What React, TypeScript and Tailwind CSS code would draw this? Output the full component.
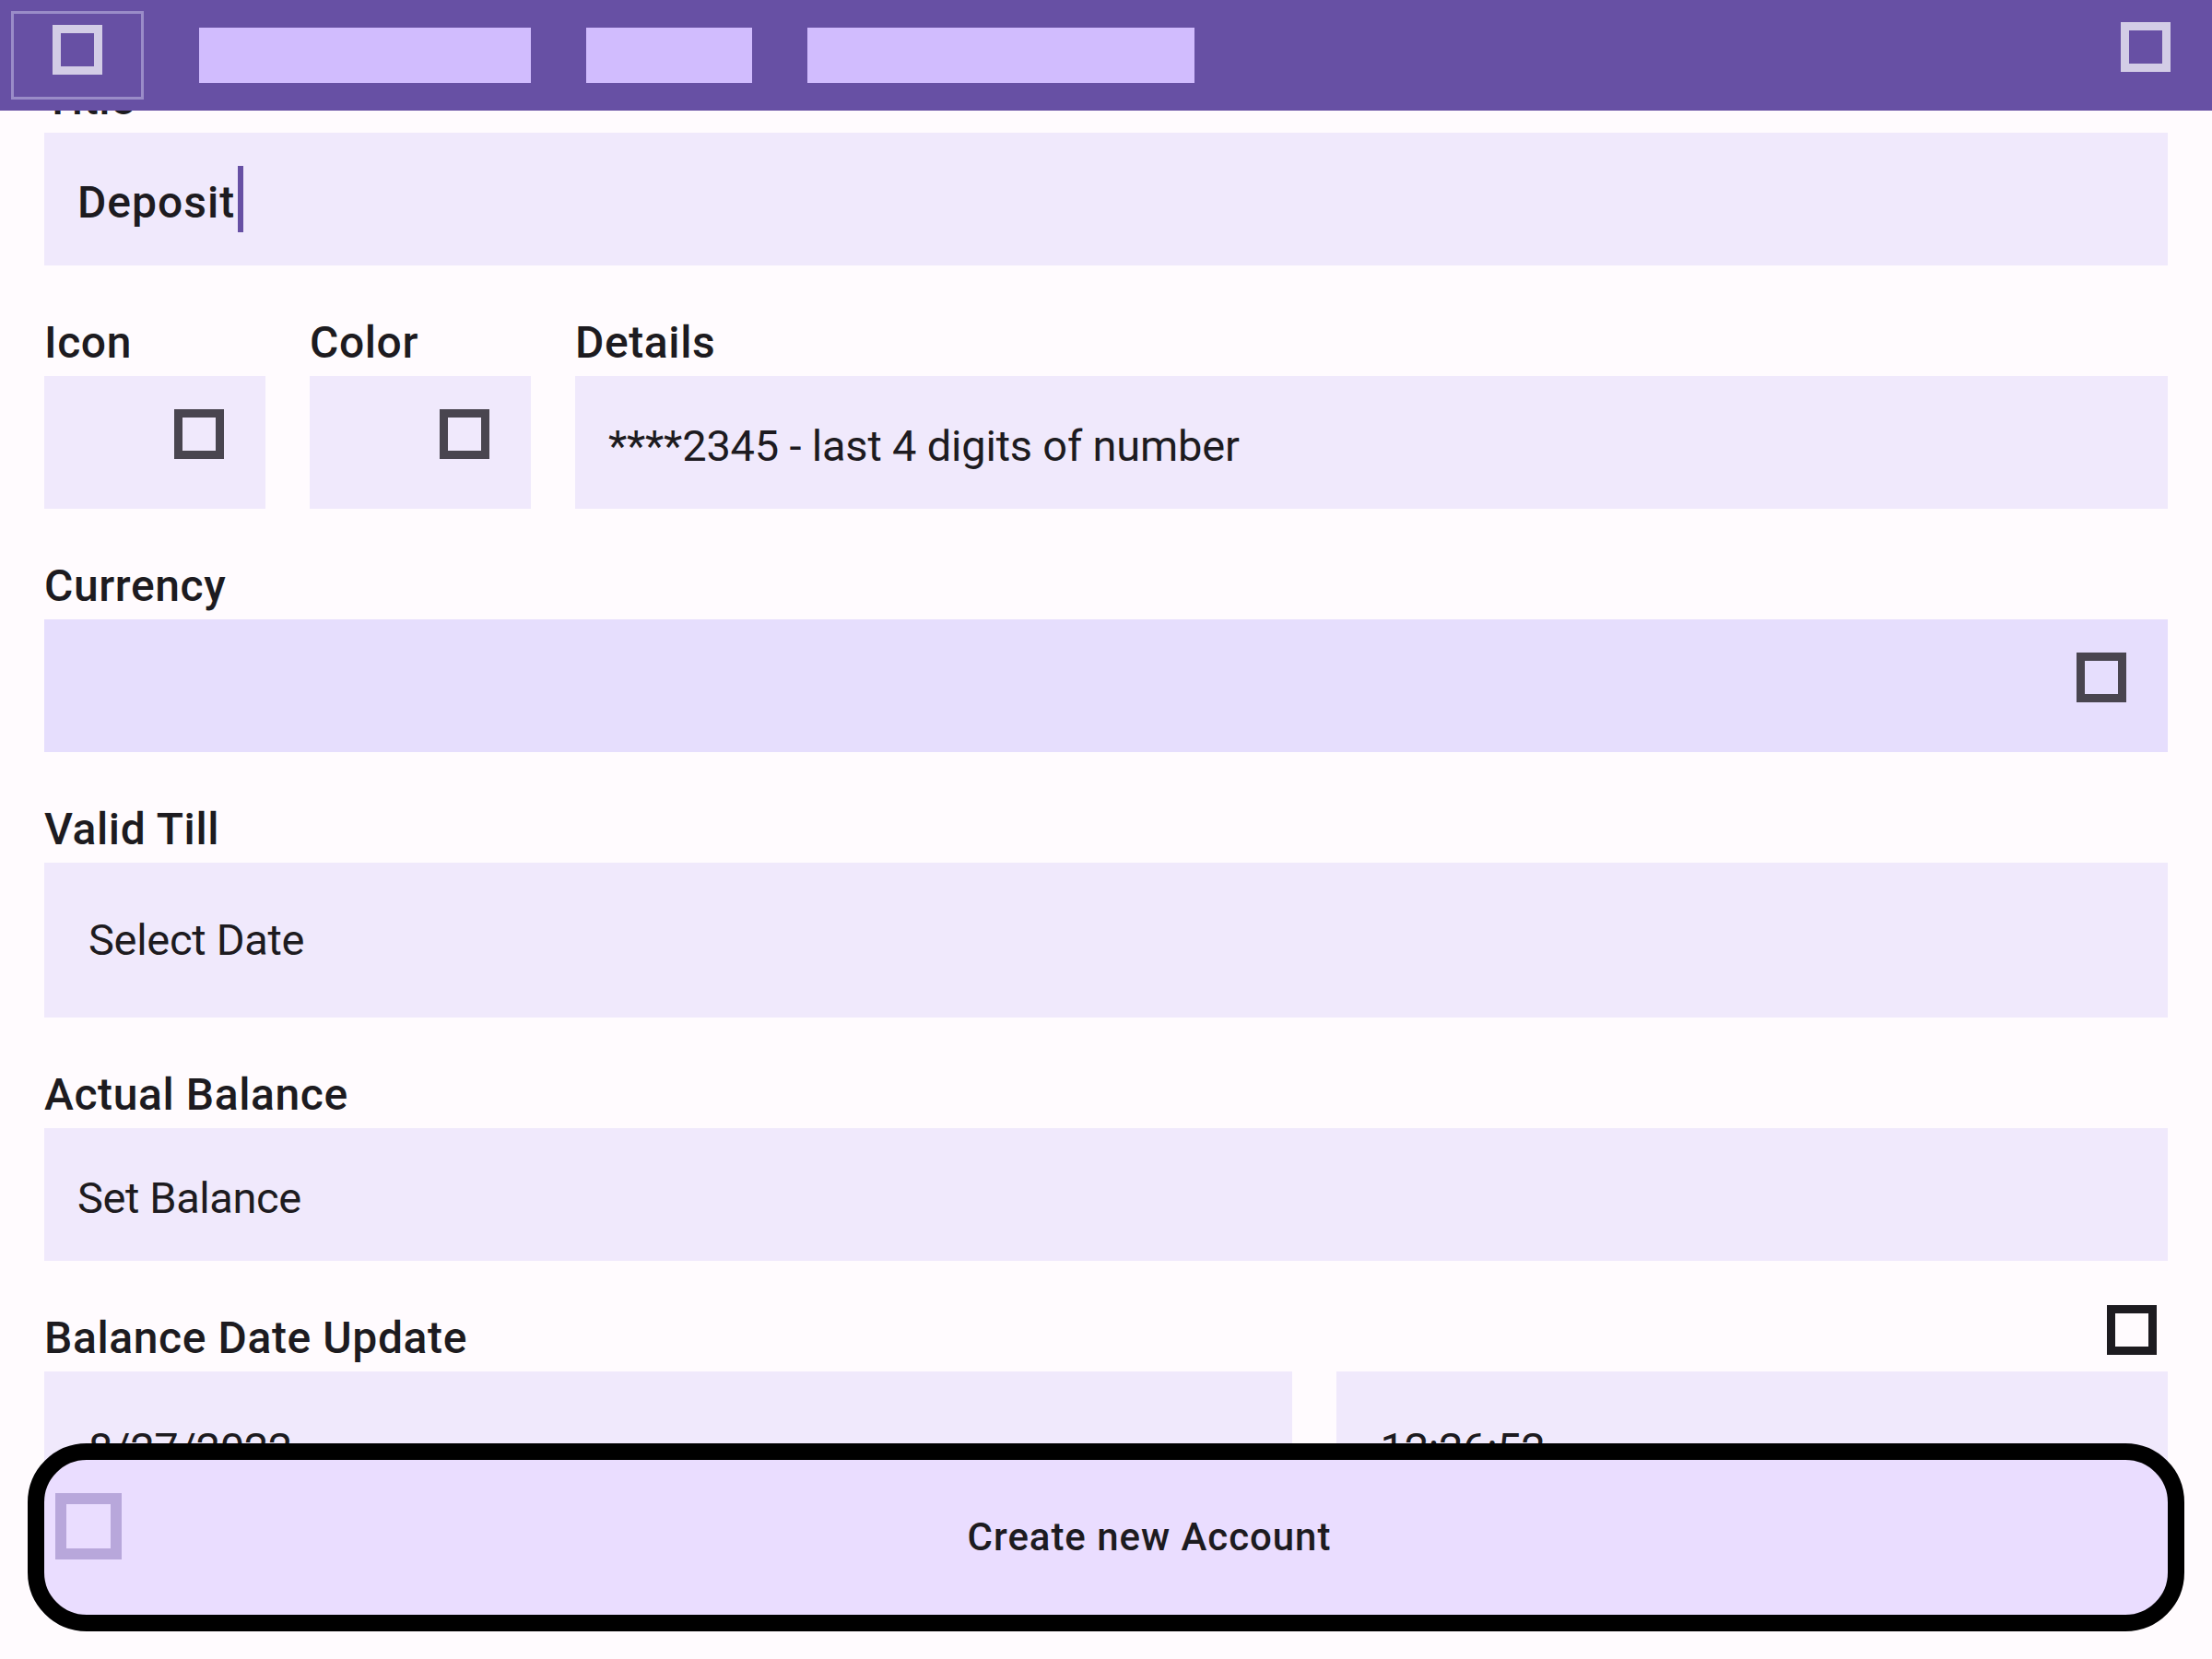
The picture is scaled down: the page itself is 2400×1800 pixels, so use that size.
import React from "react";

// placeholder glyph box (the icon font did not load in the original)
const Tofu = ({ size, stroke, color, className = "" }: any) => (
  <span
    className={`block box-border shrink-0 ${className}`}
    style={{ width: size, height: size, borderWidth: stroke, borderColor: color, borderStyle: "solid" }}
  />
);

const Label = ({ children }: any) => (
  <div className="h-[72px] text-[48px] leading-[72px] font-medium tracking-[0.6px] text-[#1d1b20] whitespace-nowrap">
    {children}
  </div>
);

const App = () => {
  return (
    <div className="relative w-full h-[1800px] overflow-hidden bg-[#fffbfe] font-['Roboto',sans-serif] text-[#1d1b20]">
      {/* top app bar */}
      <div className="absolute top-0 left-0 right-0 z-10 h-[120px] bg-[#6750a4] flex items-center">
        <div className="ml-[12px] w-[144px] h-[96px] border-[3px] border-[#9a8cc8] flex items-center justify-center pb-[12px]">
          <Tofu size={54} stroke={9} color="#d3cde6" />
        </div>
        <div className="ml-[60px] w-[360px] h-[60px] bg-[#d1bcfe]" />
        <div className="ml-[60px] w-[180px] h-[60px] bg-[#d1bcfe]" />
        <div className="ml-[60px] w-[420px] h-[60px] bg-[#d1bcfe]" />
        <div className="flex-1" />
        <Tofu size={54} stroke={9} color="#d3cde6" className="self-start mt-[24px] mr-[45px]" />
      </div>

      {/* form */}
      <div className="pt-[72px] px-[48px] flex flex-col gap-[48px]">
        <div>
          <Label>Title</Label>
          <div className="h-[144px] bg-[#f0e9fc] pl-[36px] flex items-center">
            <span className="pt-[8px] text-[48px] leading-[72px] font-medium tracking-[1px]">Deposit</span>
            <span className="ml-[3px] w-[6px] h-[72px] bg-[#6750a4]" />
          </div>
        </div>

        <div className="flex gap-[48px]">
          <div className="w-[240px]">
            <Label>Icon</Label>
            <div className="h-[144px] bg-[#f0e9fc] flex items-center justify-end pr-[45px] pb-[18px]">
              <Tofu size={54} stroke={9} color="#49454f" />
            </div>
          </div>
          <div className="w-[240px]">
            <Label>Color</Label>
            <div className="h-[144px] bg-[#f0e9fc] flex items-center justify-end pr-[45px] pb-[18px]">
              <Tofu size={54} stroke={9} color="#49454f" />
            </div>
          </div>
          <div className="flex-1">
            <Label>Details</Label>
            <div className="h-[144px] bg-[#f0e9fc] pl-[36px] flex items-center">
              <span className="pt-[8px] text-[47px] leading-[72px] tracking-[-0.2px]">****2345 - last 4 digits of number</span>
            </div>
          </div>
        </div>

        <div>
          <Label>Currency</Label>
          <div className="h-[144px] bg-[#e6defd] flex items-center justify-end pr-[45px] pb-[18px]">
            <Tofu size={54} stroke={9} color="#49454f" />
          </div>
        </div>

        <div>
          <Label>Valid Till</Label>
          <div className="h-[168px] bg-[#f0e9fc] pl-[48px] flex items-center">
            <span className="text-[47px] leading-[72px] tracking-[-0.3px]">Select Date</span>
          </div>
        </div>

        <div>
          <Label>Actual Balance</Label>
          <div className="h-[144px] bg-[#f0e9fc] pl-[36px] flex items-center">
            <span className="pt-[8px] text-[47px] leading-[72px] tracking-[-0.4px]">Set Balance</span>
          </div>
        </div>

        <div>
          <div className="flex items-start justify-between pr-[12px]">
            <Label>Balance Date Update</Label>
            <Tofu size={54} stroke={9} color="#1d1b20" />
          </div>
          <div className="grid grid-cols-[3fr_2fr] gap-[48px]">
            <div className="h-[168px] bg-[#f0e9fc] pl-[48px] flex items-center">
              <span className="text-[47px] leading-[72px] tracking-[-0.3px]">8/27/2022</span>
            </div>
            <div className="h-[168px] bg-[#f0e9fc] pl-[48px] flex items-center">
              <span className="text-[47px] leading-[72px] tracking-[-0.3px]">12:26:52</span>
            </div>
          </div>
        </div>
      </div>

      {/* bottom action button */}
      <div className="absolute left-[30px] right-[30px] bottom-[30px] z-10 h-[204px] box-border border-[18px] border-black rounded-[64px] bg-[#eaddff] flex items-center pl-[12px]">
        <Tofu size={72} stroke={12} color="#b8a7db" className="mb-[24px]" />
        <div className="flex-1 pl-[10px] text-center text-[42px] leading-[60px] font-medium tracking-[0.95px] text-[#1d1b20]">
          Create new Account
        </div>
      </div>
    </div>
  );
};

export default App;
